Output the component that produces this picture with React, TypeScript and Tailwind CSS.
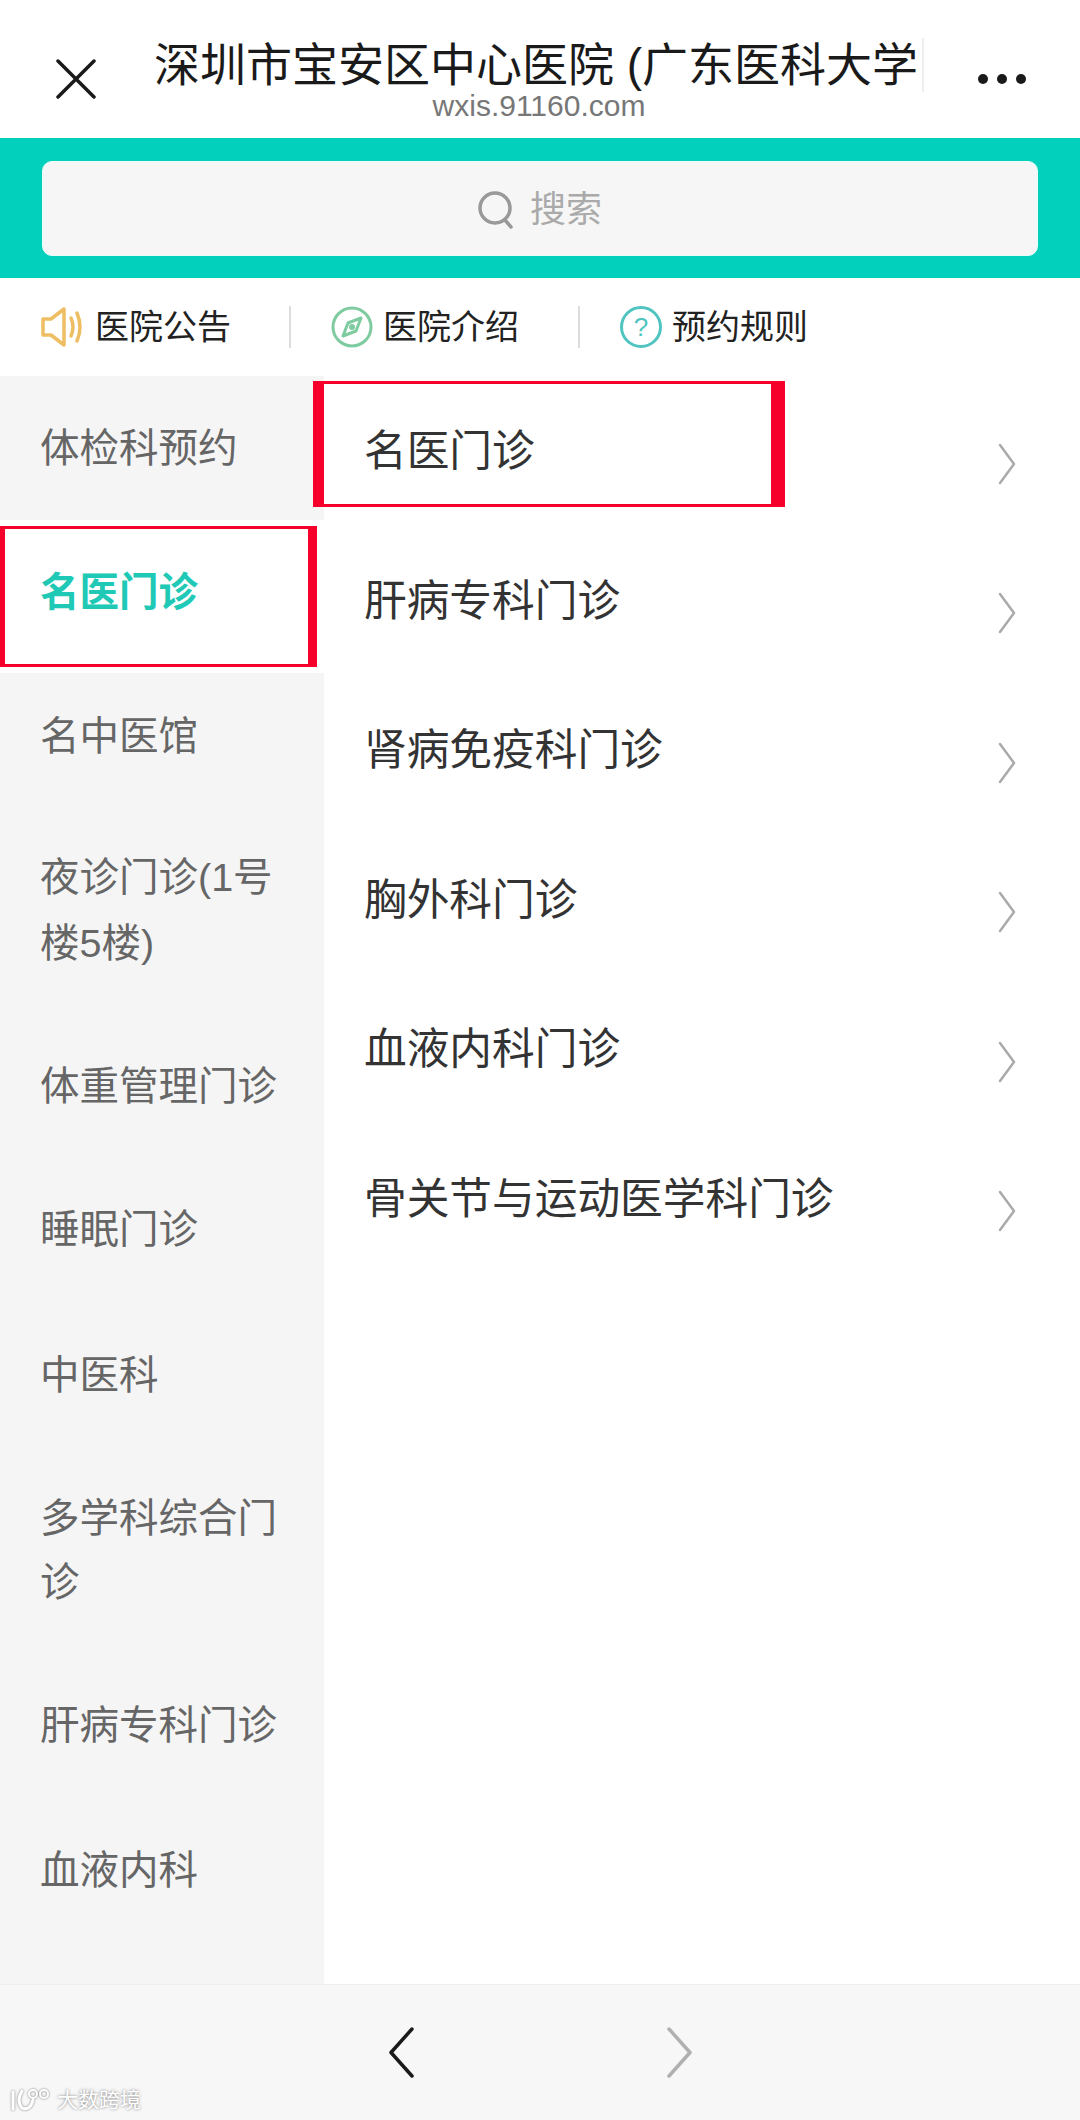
import React from 'react'

const CJK = "font-['Liberation_Sans','Noto_Sans_CJK_SC',sans-serif]"

const SIDE_ITEMS = [
  { label: '体检科预约', row: 'h-[144px]' },
  { label: '名医门诊', row: 'h-[153px] pb-[10px]', active: true },
  { label: '名中医馆', row: 'h-[126px]' },
  { label: '夜诊门诊(1号楼5楼)', row: 'h-[214px] pt-[8px] leading-[66px]' },
  { label: '体重管理门诊', row: 'h-[146px]' },
  { label: '睡眠门诊', row: 'h-[140px]' },
  { label: '中医科', row: 'h-[152px]' },
  { label: '多学科综合门诊', row: 'h-[198px]' },
  { label: '肝病专科门诊', row: 'h-[152px]' },
  { label: '血液内科', row: 'h-[138px]' },
]

const DEPTS = ['名医门诊', '肝病专科门诊', '肾病免疫科门诊', '胸外科门诊', '血液内科门诊', '骨关节与运动医学科门诊']

function App() {
  return (
    <div className={`relative flex h-[2120px] w-[1080px] flex-col overflow-hidden bg-white ${CJK}`}>
      {/* Title bar */}
      <div className="flex h-[138px] shrink-0 items-center pt-[20px]">
        <div className="flex w-[154px] shrink-0 justify-center pr-[2px]">
          <svg width="40" height="40" viewBox="0 0 40 40" fill="none" stroke="#1a1a1a" strokeWidth="3.5" strokeLinecap="round">
            <path d="M2 2 L38 38 M38 2 L2 38" />
          </svg>
        </div>
        <div className="w-[770px] shrink-0 text-center">
          <div className="h-[54px] whitespace-nowrap border-r-[2px] border-[#eeeeee] text-left text-[46px] leading-[54px] text-[#1a1a1a]">
            深圳市宝安区中心医院 (广东医科大学
          </div>
          <div className="-mt-[1px] text-[30px] leading-[30px] text-[#777777]">wxis.91160.com</div>
        </div>
        <div className="flex flex-1 justify-center gap-[9px]">
          <span className="h-[10px] w-[10px] rounded-full bg-[#1a1a1a]" />
          <span className="h-[10px] w-[10px] rounded-full bg-[#1a1a1a]" />
          <span className="h-[10px] w-[10px] rounded-full bg-[#1a1a1a]" />
        </div>
      </div>

      {/* Search */}
      <div className="h-[140px] shrink-0 bg-[#02cfbc] px-[42px] pt-[23px]">
        <div className="flex h-[95px] items-center justify-center gap-[16px] rounded-[10px] border border-[#eafffb] bg-[#f6f6f6] pt-[2px]">
          <svg width="36" height="38" viewBox="0 0 36 38" fill="none" stroke="#999999" strokeWidth="3.5" strokeLinecap="round">
            <circle cx="17" cy="17" r="15" />
            <path d="M27 29 L33 36" />
          </svg>
          <span className="text-[36px] text-[#aaaaaa]">搜索</span>
        </div>
      </div>

      {/* Quick links */}
      <div className="flex h-[98px] shrink-0 items-center pl-[40px] text-[34px] text-[#222222]">
        <div className="flex w-[249px] items-center gap-[11px]">
          <svg width="44" height="42" viewBox="0 0 44 42" fill="none" stroke="#efbe62" strokeWidth="3.5" strokeLinejoin="round" strokeLinecap="round">
            <path d="M3 13 H11 L24 3 V39 L11 29 H3 Z" />
            <path d="M31 12 Q35 21 31 30" />
            <path d="M37 7 Q43 21 37 35" />
          </svg>
          <span>医院公告</span>
        </div>
        <div className="h-[42px] w-[2px] bg-[#dddddd]" />
        <div className="flex w-[287px] items-center gap-[10px] pl-[40px]">
          <svg width="42" height="42" viewBox="0 0 42 42" fill="none" stroke="#7fcba0" strokeWidth="3" strokeLinejoin="round">
            <circle cx="21" cy="21" r="19" />
            <path d="M30 12 L25 25 L12 30 L17 17 Z" />
            <circle cx="21" cy="21" r="1.5" />
          </svg>
          <span>医院介绍</span>
        </div>
        <div className="h-[42px] w-[2px] bg-[#dddddd]" />
        <div className="flex items-center gap-[10px] pl-[40px]">
          <div className="flex h-[42px] w-[42px] items-center justify-center rounded-full border-[3px] border-[#4fc4c0] text-[26px] text-[#4fc4c0]">?</div>
          <span>预约规则</span>
        </div>
      </div>

      {/* Body */}
      <div className="flex min-h-0 flex-1">
        <div className="w-[324px] shrink-0 bg-[#f5f5f5]">
          {SIDE_ITEMS.map((item) => (
            <div
              key={item.label}
              className={`flex items-center px-[40px] text-[39.5px] leading-[64px] ${item.row} ${item.active ? 'bg-white font-bold text-[#20c9b5]' : 'text-[#666666]'}`}
            >
              <span>{item.label}</span>
            </div>
          ))}
        </div>
        <div className="flex-1">
          {DEPTS.map((name) => (
            <div key={name} className="flex h-[149.5px] items-center justify-between pl-[40px] pr-[64px] text-[42.7px] text-[#333333]">
              <span className="mt-[1px]">{name}</span>
              <svg className="mt-[26px]" width="18" height="42" viewBox="0 0 18 42" fill="none" stroke="#aaaaaa" strokeWidth="2.5" strokeLinecap="round" strokeLinejoin="round">
                <path d="M2 2 L16 21 L2 40" />
              </svg>
            </div>
          ))}
        </div>
      </div>

      {/* Bottom nav */}
      <div className="relative flex h-[136px] shrink-0 items-center justify-center gap-[251px] border-t border-[#eeeeee] bg-[#f7f7f7]">
        <svg width="27" height="51" viewBox="0 0 27 51" fill="none" stroke="#1a1a1a" strokeWidth="3.5" strokeLinecap="round" strokeLinejoin="round">
          <path d="M24 2 L3 25.5 L24 49" />
        </svg>
        <svg width="27" height="51" viewBox="0 0 27 51" fill="none" stroke="#b0b0b0" strokeWidth="3.5" strokeLinecap="round" strokeLinejoin="round">
          <path d="M3 2 L24 25.5 L3 49" />
        </svg>
        {/* Watermark */}
        <div className="absolute bottom-[8px] left-[10px] flex items-center gap-[5px] text-[21px] leading-[24px] text-white [text-shadow:0_0_3px_#777777]">
          <svg className="drop-shadow-[0_0_1px_#777777]" width="42" height="24" viewBox="0 0 42 24" fill="none" stroke="#ffffff" strokeWidth="3" strokeLinecap="round">
            <path d="M3 4 V21" />
            <path d="M12 3 Q6 13 12 20 Q20 23 23 12" />
            <circle cx="23" cy="6" r="4" strokeWidth="2" />
            <circle cx="34" cy="6" r="4" strokeWidth="2" />
          </svg>
          <span>大数跨境</span>
        </div>
      </div>

      {/* Red annotation boxes */}
      <div className="absolute left-[313px] top-[381px] h-[126px] w-[472px] border-y-[3px] border-r-[14px] border-l-[11px] border-[#f6002b]" />
      <div className="absolute left-0 top-[526px] h-[141px] w-[317px] border-y-[3px] border-r-[9px] border-l-[5px] border-[#f6002b]" />
    </div>
  )
}

export default App
